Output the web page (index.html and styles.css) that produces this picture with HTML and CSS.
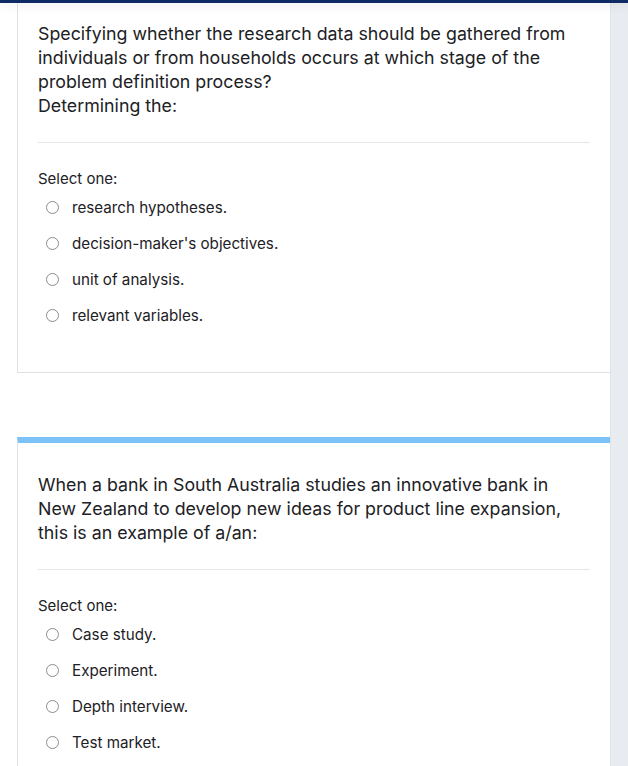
FILE: index.html
```html
<!DOCTYPE html>
<html lang="en">
<head>
<meta charset="utf-8">
<title>Quiz</title>
<link rel="stylesheet" href="styles.css">
</head>
<body>
<div class="topbar"></div>
<div class="layout">
  <main class="main">
    <section class="que que-first">
      <div class="qtext">
        <p>Specifying whether the research data should be gathered from individuals or from households occurs at which stage of the problem definition process?</p>
        <p>Determining the:</p>
      </div>
      <hr class="sep">
      <div class="prompt">Select one:</div>
      <ul class="answers">
        <li><span class="radio"></span>research hypotheses.</li>
        <li><span class="radio"></span>decision-maker's objectives.</li>
        <li><span class="radio"></span>unit of analysis.</li>
        <li><span class="radio"></span>relevant variables.</li>
      </ul>
    </section>
    <section class="que que-second">
      <div class="qtext">
        <p>When a bank in South Australia studies an innovative bank in New Zealand to develop new ideas for product line expansion, this is an example of a/an:</p>
      </div>
      <hr class="sep">
      <div class="prompt">Select one:</div>
      <ul class="answers">
        <li><span class="radio"></span>Case study.</li>
        <li><span class="radio"></span>Experiment.</li>
        <li><span class="radio"></span>Depth interview.</li>
        <li><span class="radio"></span>Test market.</li>
      </ul>
    </section>
  </main>
  <aside class="drawer"></aside>
</div>
</body>
</html>
```
FILE: styles.css
```css
* { box-sizing: border-box; }
html, body { margin: 0; padding: 0; background: #fff; }
body {
  font-family: Inter, "Liberation Sans", Arial, sans-serif;
  color: #1d2125;
  height: 766px;
  overflow: hidden;
}
.topbar {
  position: relative;
  z-index: 2;
  height: 3px;
  background: #0f2b66;
  box-shadow: 0 2px 10px rgba(0,0,0,0.12);
}
.layout {
  display: flex;
  height: 763px;
}
.main {
  flex: 1;
  padding-left: 17px;
}
.drawer {
  width: 18px;
  background: #e8ebef;
  border-left: 1px solid #dfe2e6;
}
.que {
  border-left: 1px solid #dee2e6;
  border-bottom: 1px solid #dee2e6;
  padding: 0 20px 39px 20px;
}
.que-first { padding-top: 19px; }
.que-second {
  margin-top: 64px;
  border-top: 6px solid #7cc2f7;
  padding-top: 30px;
}
.qtext p {
  margin: 0;
  font-size: 17.8px;
  line-height: 24px;
}
.sep {
  border: 0;
  border-top: 1px solid #e6e6e6;
  margin: 24px 0 0 0;
}
.prompt {
  font-size: 15px;
  line-height: 20px;
  margin-top: 26px;
}
.answers {
  list-style: none;
  margin: 0;
  padding: 0;
}
.answers li {
  display: flex;
  align-items: center;
  height: 36px;
  font-size: 15.2px;
  padding-left: 8px;
}
.radio {
  width: 13px;
  height: 13px;
  border: 1px solid #8c8c8c;
  border-radius: 50%;
  background: #fff;
  margin-right: 13px;
  flex: none;
}
```
